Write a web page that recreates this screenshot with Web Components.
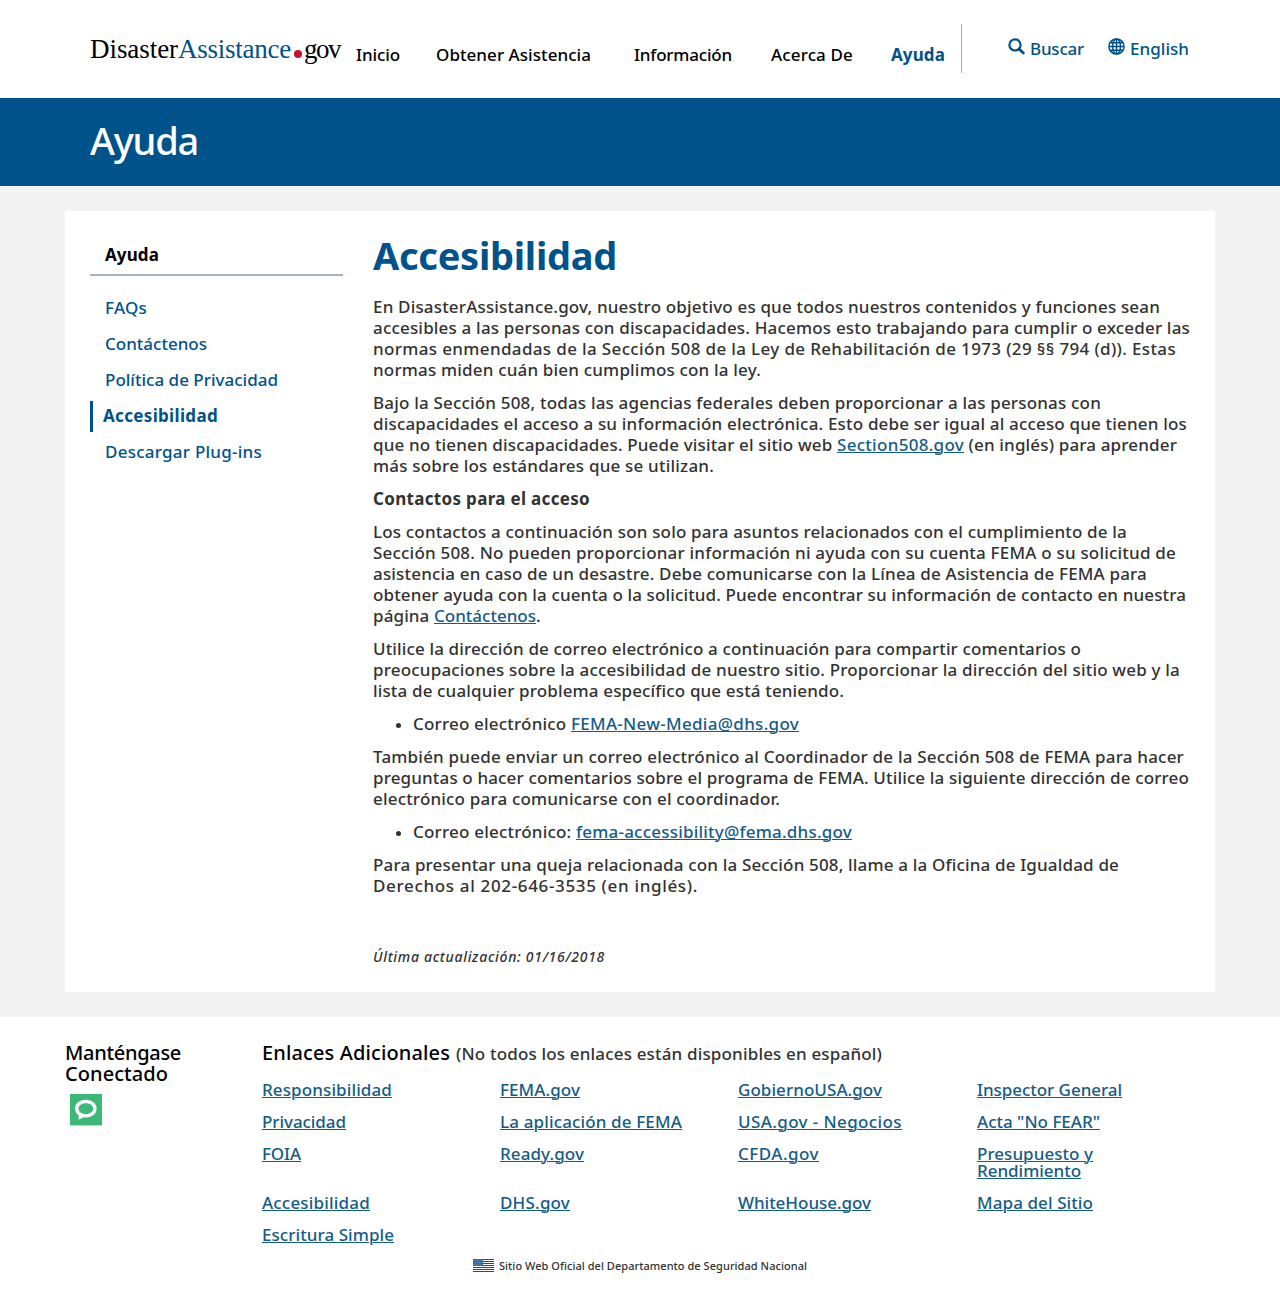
<!DOCTYPE html>
<html lang="es">
<head>
<meta charset="utf-8">
<title>Accesibilidad | DisasterAssistance.gov</title>
<style>
body{margin:0;background:#fff;font-family:"Noto Sans","Open Sans",sans-serif;font-size:17px;font-weight:500;line-height:21px;color:#323232}
</style>
</head>
<body>
<da-header></da-header>
<da-banner><text-line w="108">Ayuda</text-line></da-banner>
<da-main>
  <da-sidebar slot="side"></da-sidebar>
  <da-article></da-article>
</da-main>
<da-footer></da-footer>
<script>
class Base extends HTMLElement {
  connectedCallback() {
    if (this.shadowRoot) return;
    this.attachShadow({ mode: 'open' }).innerHTML = this.render();
  }
}

customElements.define('da-icon', class extends Base {
  render() {
    const art = {
      search: '<svg width="17" height="17" viewBox="0 0 17 17" fill="none" stroke="#00528a"><circle cx="7" cy="6.9" r="5.6" stroke-width="2.2"/><path d="M11 11l4.300 4" stroke-width="2.8" stroke-linecap="round"/></svg>',
      globe: '<svg width="17" height="17" viewBox="0 0 17 17" fill="none" stroke="#00528a" stroke-width="1.5"><circle cx="8.5" cy="8.5" r="7.6"/><ellipse cx="8.5" cy="8.5" rx="4" ry="7.6"/><path d="M8.5 1v15M1 8.500h15M2.200 4.700h12.600M2.200 12.300h12.600"/></svg>',
      chat: '<svg width="32" height="32" viewBox="0 0 32 32"><path fill="#3cb878" d="M0 0h32v31.4H0z"/><path fill="#fff" fill-rule="evenodd" d="M15.800 5.700C22 5.700 26.600 9.300 26.600 14.600S22 23.500 15.800 23.500c-1 0-2-.1-2.900-.3-.9 1-2.200 1.700-4.400 2.400l.2-4.200C6.400 19.800 5 17.500 5 14.600 5 9.300 9.600 5.700 15.800 5.700zm0 3.500c-4.300 0-7.300 2.200-7.300 5.400s3 5.500 7.300 5.500 7.300-2.300 7.300-5.500-3-5.400-7.300-5.400z"/></svg>',
      flag: '<svg width="21" height="13" viewBox="0 0 21 13" shape-rendering="crispEdges"><path fill="#fff" d="M0 0h21v13H0z"/><path fill="#c80d0d" d="M0 0h21v1H0zM0 2h21v1H0zM0 4h21v1H0zM0 6h21v1H0zM0 8h21v1H0zM0 10h21v1H0zM0 12h21v1H0z"/><path fill="#2c71ab" d="M0 0h10v7H0z"/><path fill="#5a8ab3" d="M1 1h1v1H1zM3 1h1v1H3zM5 1h1v1H5zM7 1h1v1H7zM2 3h1v1H2zM4 3h1v1H4zM6 3h1v1H6zM8 3h1v1H8zM1 5h1v1H1zM3 5h1v1H3zM5 5h1v1H5zM7 5h1v1H7z"/></svg>'
    };
    return `<style>:host{display:block;flex:none}svg{display:block}</style>${art[this.getAttribute('name')]}`;
  }
});

customElements.define('da-header', class extends Base {
  render() {
    return `<style>
      :host{display:flex;height:98px;padding-left:90px;box-sizing:border-box;align-items:flex-start;color:#000;background:#fff}
      .logo{display:flex;width:250px;padding-top:35px;font:400 27px/28px "Liberation Serif",serif;align-items:flex-start}
      .b{color:#00528a}
      .dot{width:8px;height:8px;border-radius:50%;background:#c8102e;margin:15px 2px 0 3px}
      nav{display:flex;margin-left:16px;padding-top:44px}
      nav text-line:nth-child(2){margin-left:36px} nav text-line:nth-child(3){margin-left:43px}
      nav text-line:nth-child(4){margin-left:39px} nav text-line:nth-child(5){margin-left:38px;font-weight:700;color:#00528a}
      .tools{display:flex;margin:24px 0 0 16px;height:49px;border-left:1px solid #a9adb3;padding-left:46px;color:#00528a}
      .tools>div{display:flex;gap:5px}.tools>div+div{margin-left:24px}
      .tools da-icon{margin-top:14px}.tools text-line{margin-top:14px}
    </style>
    <div class="logo"><text-line w="88">Disaster</text-line><text-line class="b" w="113">Assistance</text-line><i class="dot"></i><text-line w="36">gov</text-line></div>
    <nav><text-line w="44">Inicio</text-line><text-line w="155">Obtener Asistencia</text-line><text-line w="98">Información</text-line><text-line w="82">Acerca De</text-line><text-line w="54">Ayuda</text-line></nav>
    <div class="tools"><div><da-icon name="search"></da-icon><text-line w="54">Buscar</text-line></div><div><da-icon name="globe"></da-icon><text-line w="59">English</text-line></div></div>`;
  }
});

customElements.define('da-banner', class extends Base {
  render() {
    return `<style>:host{display:block;height:88px;box-sizing:border-box;padding:19px 0 0 90px;background:#00528a;color:#fff;font-size:38px;line-height:46px}</style><slot></slot>`;
  }
});

customElements.define('da-main', class extends Base {
  render() {
    return `<style>
      :host{display:block;background:#f3f3f3;padding:25px 65px}
      .card{display:flex;background:#fff;height:781px}
      .side{width:253px;margin:0 30px 0 25px}
    </style><div class="card"><div class="side"><slot name="side"></slot></div><slot></slot></div>`;
  }
});

customElements.define('da-sidebar', class extends Base {
  render() {
    return `<style>
      :host{display:block;color:#00528a}
      .head{color:#000;font-weight:700;padding:33px 0 9px 15px;border-bottom:2px solid #a9b2bf;height:21px}
      ul{list-style:none;margin:17px 0 0;padding:0;display:flex;flex-direction:column;gap:5px}
      li{height:31px;padding:4px 0 0 15px;box-sizing:border-box}
      .on{border-left:3px solid #00528a;padding-left:10px;font-weight:700}
    </style>
    <div class="head"><text-line w="54">Ayuda</text-line></div>
    <ul><li><text-line w="42">FAQs</text-line></li><li><text-line w="102">Contáctenos</text-line></li><li><text-line w="173">Política de Privacidad</text-line></li><li class="on"><text-line w="115">Accesibilidad</text-line></li><li><text-line w="157">Descargar Plug-ins</text-line></li></ul>`;
  }
});

customElements.define('da-article', class extends Base {
  render() {
    const part = (w, s) => `<text-line w="${w}">${s}</text-line>`;
    const link = (w, s) => `<text-line class="a" w="${w}">${s}</text-line>`;
    const row = (...parts) => `<span class="row">${parts.join('')}</span>`;
    const p = rows => '<p>' + rows.map(([w, s]) => row(part(w, s))).join(' ') + '</p>';
    return `<style>
      :host{display:block;flex:1}
      h1{margin:22px 0 0;color:#00528a;font-weight:700;font-size:38px;line-height:44px;height:44px}
      p,h2,ul{margin:0 0 12px} h1+p{margin-top:19px}
      .row{display:flex;height:21px}
      h2{font-size:inherit;line-height:21px;height:21px;font-weight:700}
      ul{padding:0;list-style:none}
      li{display:flex;height:21px}
      li::before{content:"";width:5px;height:5px;border-radius:50%;background:#323232;margin:10px 12px 0 23px}
      .a{color:#145c87;text-decoration:underline;text-decoration-thickness:1px;text-underline-offset:1px}
      .upd{margin-top:50px;font-size:14px;font-style:italic}
    </style>
    <h1>${part(244, 'Accesibilidad')}</h1>
    ${p([[787, 'En DisasterAssistance.gov, nuestro objetivo es que todos nuestros contenidos y funciones sean'], [817, 'accesibles a las personas con discapacidades. Hacemos esto trabajando para cumplir o exceder las'], [803, 'normas enmendadas de la Sección 508 de la Ley de Rehabilitación de 1973 (29 §§ 794 (d)). Estas'], [388, 'normas miden cuán bien cumplimos con la ley.']])}
    <p>${row(part(728, 'Bajo la Sección 508, todas las agencias federales deben proporcionar a las personas con'))}
    ${row(part(814, 'discapacidades el acceso a su información electrónica. Esto debe ser igual al acceso que tienen los'))}
    ${row(part(464, 'que no tienen discapacidades. Puede visitar el sitio web&nbsp;'), link(127, 'Section508.gov'), part(213, '&nbsp;(en inglés) para aprender'))}
    ${row(part(341, 'más sobre los estándares que se utilizan.'))}</p>
    <h2>${part(217, 'Contactos para el acceso')}</h2>
    <p>${row(part(754, 'Los contactos a continuación son solo para asuntos relacionados con el cumplimiento de la'))}
    ${row(part(803, 'Sección 508. No pueden proporcionar información ni ayuda con su cuenta FEMA o su solicitud de'))}
    ${row(part(774, 'asistencia en caso de un desastre. Debe comunicarse con la Línea de Asistencia de FEMA para'))}
    ${row(part(813, 'obtener ayuda con la cuenta o la solicitud. Puede encontrar su información de contacto en nuestra'))}
    ${row(part(61, 'página&nbsp;'), link(102, 'Contáctenos'), part(5, '.'))}</p>
    ${p([[708, 'Utilice la dirección de correo electrónico a continuación para compartir comentarios o'], [807, 'preocupaciones sobre la accesibilidad de nuestro sitio. Proporcionar la dirección del sitio web y la'], [471, 'lista de cualquier problema específico que está teniendo.']])}
    <ul><li>${part(158, 'Correo electrónico&nbsp;')}${link(228, 'FEMA-New-Media@dhs.gov')}</li></ul>
    ${p([[811, 'También puede enviar un correo electrónico al Coordinador de la Sección 508 de FEMA para hacer'], [816, 'preguntas o hacer comentarios sobre el programa de FEMA. Utilice la siguiente dirección de correo'], [407, 'electrónico para comunicarse con el coordinador.']])}
    <ul><li>${part(163, 'Correo electrónico:&nbsp;')}${link(276, 'fema-accessibility@fema.dhs.gov')}</li></ul>
    ${p([[746, 'Para presentar una queja relacionada con la Sección 508, llame a la Oficina de Igualdad de'], [325, 'Derechos al 202-646-3535 (en inglés).']])}
    <p class="upd">${part(232, 'Última actualización: 01/16/2018')}</p>`;
  }
});

customElements.define('da-footer', class extends Base {
  render() {
    const links = [
      [130, 'Responsibilidad'], [80, 'FEMA.gov'], [144, 'GobiernoUSA.gov'], [145, 'Inspector General'],
      [84, 'Privacidad'], [182, 'La aplicación de FEMA'], [164, 'USA.gov - Negocios'], [123, 'Acta "No FEAR"'],
      [39, 'FOIA'], [84, 'Ready.gov'], [81, 'CFDA.gov'], [116, 'Presupuesto y', 104, 'Rendimiento'],
      [108, 'Accesibilidad'], [70, 'DHS.gov'], [133, 'WhiteHouse.gov'], [116, 'Mapa del Sitio'],
      [132, 'Escritura Simple']];
    return `<style>
      :host{display:block;background:#fff;height:296px}
      .cols{display:flex;padding:25px 65px 0;color:#000}
      .stay{width:197px;font-size:20px;line-height:21px}
      .stay text-line{display:block}
      .stay da-icon{margin:10px 0 0 5px}
      .head{display:flex;align-items:baseline;height:21px;gap:6px}
      .big{font-size:20px}.head text-line+text-line{color:#323232}
      .grid{display:grid;grid-template-columns:238px 238px 239px 200px;row-gap:15px;margin-top:18px;line-height:17px;color:#145c87}
      .grid text-line{display:block;text-decoration:underline;text-decoration-thickness:1px;text-underline-offset:1px}
      .seal{display:flex;gap:5px;margin:9px 0 0 473px;font-size:11px;line-height:14px;height:20px;padding-top:7px}
    </style>
    <div class="cols">
      <div class="stay"><text-line w="116">Manténgase</text-line><text-line w="103">Conectado</text-line><da-icon name="chat"></da-icon></div>
      <div><div class="head"><text-line class="big" w="188">Enlaces Adicionales</text-line><text-line w="426">(No todos los enlaces están disponibles en español)</text-line></div>
      <div class="grid">${links.map(([w, s, w2, s2]) => `<div><text-line w="${w}">${s}</text-line>${s2 ? `<text-line w="${w2}">${s2}</text-line>` : ''}</div>`).join('')}</div></div>
    </div>
    <div class="seal"><da-icon name="flag"></da-icon><text-line w="308">Sitio Web Oficial del Departamento de Seguridad Nacional</text-line></div>`;
  }
});

/* One line of type, tracked so that it sets to the measure given in "w". */
customElements.define('text-line', class extends Base {
  connectedCallback() {
    super.connectedCallback();
    const s = this.shadowRoot.querySelector('span');
    const w = +this.getAttribute('w');
    const n = this.textContent.length;
    s.style.letterSpacing = (w - s.getBoundingClientRect().width) / n + 'px';
    this.style.width = w + 'px';
  }
  render() {
    return '<style>:host{display:inline-block;white-space:nowrap;flex:none}span{display:inline}</style><span><slot></slot></span>';
  }
});
</script>
</body>
</html>
